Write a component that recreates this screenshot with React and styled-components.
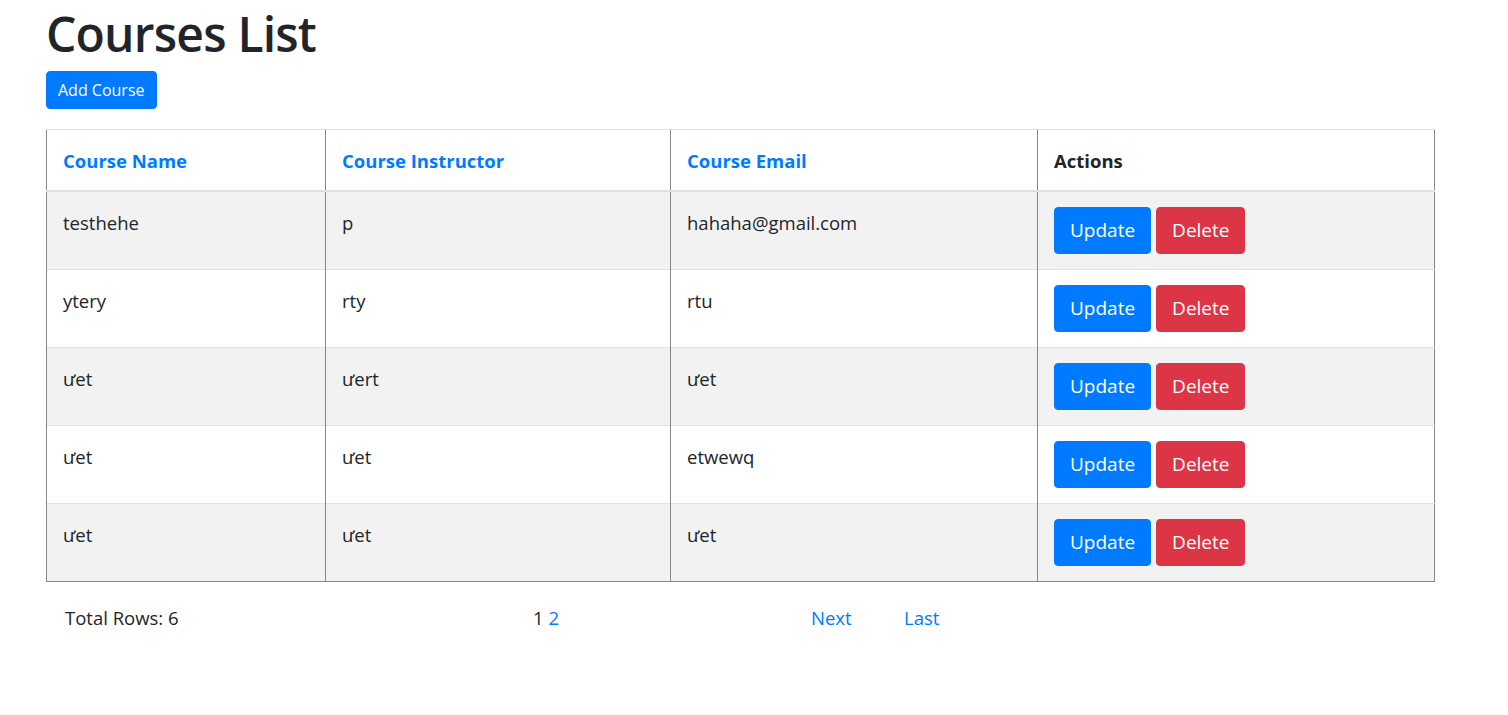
import React from "react";
import styled, { createGlobalStyle } from "styled-components";

const GlobalStyle = createGlobalStyle`
  html, body {
    margin: 0;
    padding: 0;
    background: #fff;
  }
  body {
    font-family: "Open Sans", "Noto Sans", "Liberation Sans", sans-serif;
    color: #212529;
  }
  * {
    box-sizing: border-box;
  }
`;

const Page = styled.div`
  padding: 0 0 40px 46px;
  width: 1434px;
`;

const Title = styled.h1`
  margin: 0 0 4px;
  font-size: 48px;
  font-weight: 600;
  line-height: 67px;
  letter-spacing: -0.8px;
  color: #212529;
`;

const Button = styled.button`
  display: inline-block;
  border: 1px solid transparent;
  border-radius: 4px;
  font-family: inherit;
  color: #fff;
  cursor: pointer;
  background: ${(p) => (p.$variant === "danger" ? "#dc3545" : "#007bff")};
  border-color: ${(p) => (p.$variant === "danger" ? "#dc3545" : "#007bff")};
  font-size: ${(p) => (p.$size === "lg" ? "19px" : "16px")};
  line-height: 1.5;
  padding: ${(p) => (p.$size === "lg" ? "8px 15px" : "5px 11px")};
  height: ${(p) => (p.$size === "lg" ? "47px" : "38px")};
`;

const Table = styled.table`
  margin-top: 20px;
  width: 1388px;
  table-layout: fixed;
  border-collapse: collapse;
  border-left: 1px solid #888;
  border-right: 1px solid #888;
  border-bottom: 1px solid #888;
  font-size: 18.5px;
  line-height: 27px;
`;

const HeadCell = styled.th`
  text-align: left;
  font-weight: 700;
  padding: 17px 16px 16px;
  color: ${(p) => (p.$plain ? "#212529" : "#007bff")};
  border-top: 1px solid #dee2e6;
  border-bottom: 2px solid #dee2e6;
  border-left: 1px solid #888;
`;

const Row = styled.tr`
  background: ${(p) => (p.$striped ? "#f2f2f2" : "#fff")};
  border-top: 1px solid #dee2e6;
`;

const Cell = styled.td`
  vertical-align: top;
  padding: 15px 16px;
  border-left: 1px solid #888;
  color: #212529;
  overflow: hidden;
  white-space: nowrap;

  & > span {
    display: block;
    padding-top: 2px;
  }
`;

const Actions = styled.div`
  display: flex;
  gap: 5px;
`;

const Footer = styled.div`
  display: flex;
  margin-top: 22px;
  padding-left: 19px;
  font-size: 18.5px;
  line-height: 27px;
`;

const Total = styled.div`
  width: 468px;
`;

const Pages = styled.div`
  width: 278px;
  display: flex;
  gap: 5px;
`;

const PageLink = styled.a`
  color: ${(p) => (p.$current ? "#212529" : "#007bff")};
  text-decoration: none;
  cursor: pointer;
`;

const NavLink = styled.a`
  color: #007bff;
  text-decoration: none;
  width: 93px;
  cursor: pointer;
`;

const courses = [
  { name: "testhehe", instructor: "p", email: "hahaha@gmail.com" },
  { name: "ytery", instructor: "rty", email: "rtu" },
  { name: "ưet", instructor: "ưert", email: "ưet" },
  { name: "ưet", instructor: "ưet", email: "etwewq" },
  { name: "ưet", instructor: "ưet", email: "ưet" },
];

export default function App() {
  return (
    <>
      <GlobalStyle />
      <Page>
        <Title>Courses List</Title>
        <Button>Add Course</Button>
        <Table>
          <colgroup>
            <col style={{ width: 279 }} />
            <col style={{ width: 345 }} />
            <col style={{ width: 367 }} />
            <col style={{ width: 397 }} />
          </colgroup>
          <thead>
            <tr>
              <HeadCell>Course Name</HeadCell>
              <HeadCell>Course Instructor</HeadCell>
              <HeadCell>Course Email</HeadCell>
              <HeadCell $plain>Actions</HeadCell>
            </tr>
          </thead>
          <tbody>
            {courses.map((c, i) => (
              <Row key={i} $striped={i % 2 === 0}>
                <Cell>
                  <span>{c.name}</span>
                </Cell>
                <Cell>
                  <span>{c.instructor}</span>
                </Cell>
                <Cell>
                  <span>{c.email}</span>
                </Cell>
                <Cell>
                  <Actions>
                    <Button $size="lg">Update</Button>
                    <Button $size="lg" $variant="danger">
                      Delete
                    </Button>
                  </Actions>
                </Cell>
              </Row>
            ))}
          </tbody>
        </Table>
        <Footer>
          <Total>Total Rows: 6</Total>
          <Pages>
            <PageLink $current>1</PageLink>
            <PageLink>2</PageLink>
          </Pages>
          <NavLink>Next</NavLink>
          <NavLink>Last</NavLink>
        </Footer>
      </Page>
    </>
  );
}
